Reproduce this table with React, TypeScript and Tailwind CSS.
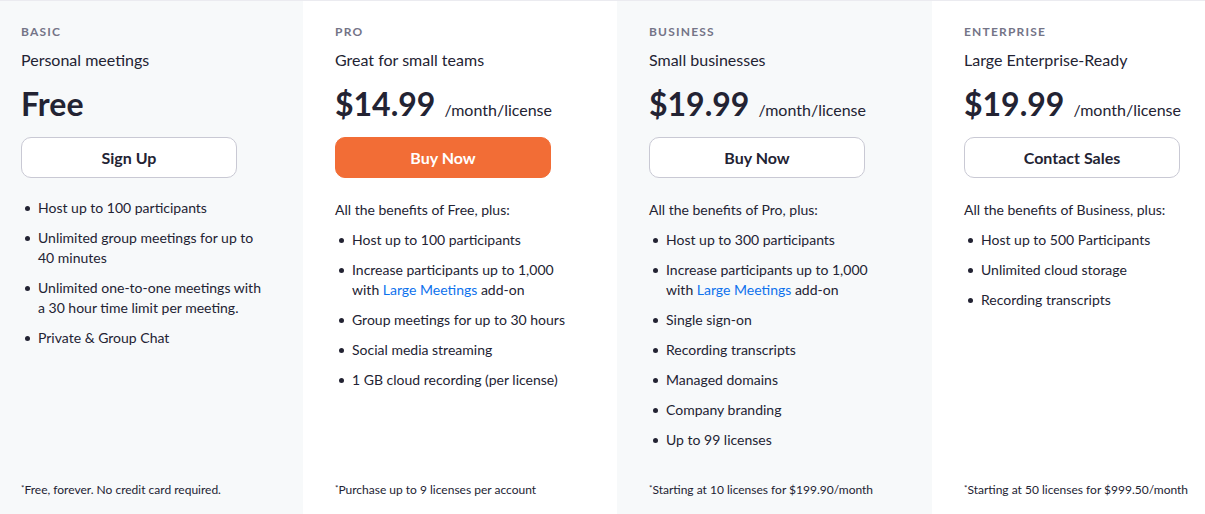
import React from 'react';

interface Plan {
  label: string;
  tagline: string;
  price: string;
  per?: string;
  button: string;
  primary?: boolean;
  intro?: string;
  features: React.ReactNode[];
  note: string;
  shaded?: boolean;
  width: string;
  pad: string;
}

const Link = ({ children }: { children: React.ReactNode }) => (
  <span className="text-[#0e72ed]">{children}</span>
);

const plans: Plan[] = [
  {
    label: 'BASIC',
    tagline: 'Personal meetings',
    price: 'Free',
    button: 'Sign Up',
    features: [
      'Host up to 100 participants',
      'Unlimited group meetings for up to 40 minutes',
      'Unlimited one-to-one meetings with a 30 hour time limit per meeting.',
      'Private & Group Chat',
    ],
    note: 'Free, forever. No credit card required.',
    shaded: true,
    width: 'w-[303px]',
    pad: 'pl-[21px] pr-[30px]',
  },
  {
    label: 'PRO',
    tagline: 'Great for small teams',
    price: '$14.99',
    per: '/month/license',
    button: 'Buy Now',
    primary: true,
    intro: 'All the benefits of Free, plus:',
    features: [
      'Host up to 100 participants',
      <>Increase participants up to 1,000 with <Link>Large Meetings</Link> add-on</>,
      'Group meetings for up to 30 hours',
      'Social media streaming',
      '1 GB cloud recording (per license)',
    ],
    note: 'Purchase up to 9 licenses per account',
    width: 'w-[314px]',
    pad: 'pl-8 pr-[30px]',
  },
  {
    label: 'BUSINESS',
    tagline: 'Small businesses',
    price: '$19.99',
    per: '/month/license',
    button: 'Buy Now',
    intro: 'All the benefits of Pro, plus:',
    features: [
      'Host up to 300 participants',
      <>Increase participants up to 1,000 with <Link>Large Meetings</Link> add-on</>,
      'Single sign-on',
      'Recording transcripts',
      'Managed domains',
      'Company branding',
      'Up to 99 licenses',
    ],
    note: 'Starting at 10 licenses for $199.90/month',
    shaded: true,
    width: 'w-[315px]',
    pad: 'pl-8 pr-[30px]',
  },
  {
    label: 'ENTERPRISE',
    tagline: 'Large Enterprise-Ready',
    price: '$19.99',
    per: '/month/license',
    button: 'Contact Sales',
    intro: 'All the benefits of Business, plus:',
    features: [
      'Host up to 500 Participants',
      'Unlimited cloud storage',
      'Recording transcripts',
    ],
    note: 'Starting at 50 licenses for $999.50/month',
    width: 'flex-1',
    pad: 'pl-8 pr-4',
  },
];

export default function App() {
  return (
    <main
      className="min-h-screen h-[514px] flex border-t border-[#ebebf0] bg-white text-[#232333] overflow-hidden"
      style={{ fontFamily: 'Lato, "Open Sans", sans-serif' }}
    >
      {plans.map((plan) => (
        <section
          key={plan.label}
          className={`${plan.width} ${plan.pad} shrink-0 flex flex-col pt-[23px] pb-[15px] ${
            plan.shaded ? 'bg-[#f7f9fa]' : 'bg-white'
          }`}
        >
          {/* Header */}
          <div className="text-[12px] leading-4 font-bold tracking-[0.1em] text-[#747487]">
            {plan.label}
          </div>
          <div className="mt-[10px] text-[16px] leading-5">{plan.tagline}</div>
          <div className="mt-[14px] flex items-baseline gap-[9px] whitespace-nowrap">
            <span className="text-[32px] leading-10 font-bold">{plan.price}</span>
            {plan.per && <span className="text-[16px]">{plan.per}</span>}
          </div>

          {/* Button */}
          <button
            className={`mt-[13px] w-[216px] h-[41px] rounded-[10px] text-[16px] font-bold ${
              plan.primary
                ? 'bg-[#f26d36] text-white border border-[#f26d36]'
                : 'bg-white border border-[#c9c9d4] text-[#232333]'
            }`}
          >
            {plan.button}
          </button>

          {/* Features */}
          {plan.intro && (
            <p className="mt-[22px] text-[14px] leading-5">{plan.intro}</p>
          )}
          <ul className={`${plan.intro ? 'mt-[10px]' : 'mt-[20px]'} flex flex-col gap-[10px]`}>
            {plan.features.map((f, i) => (
              <li key={i} className="flex text-[14px] leading-5 pr-2">
                <span className="w-[17px] shrink-0 flex items-start pt-[8px] pl-[4px]">
                  <span className="w-[5px] h-[5px] rounded-full bg-[#232333]" />
                </span>
                <span>{f}</span>
              </li>
            ))}
          </ul>

          {/* Footnote */}
          <p className="mt-auto text-[12px] leading-4 whitespace-nowrap">
            <span className="text-[8px] relative -top-[3px]">*</span>
            {plan.note}
          </p>
        </section>
      ))}
    </main>
  );
}
